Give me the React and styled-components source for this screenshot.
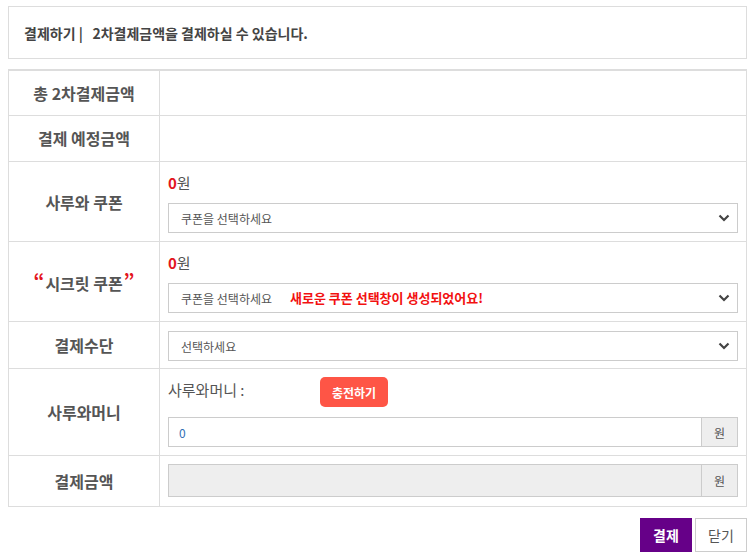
import React from 'react';
import styled, { createGlobalStyle } from 'styled-components';

const GlobalStyle = createGlobalStyle`
  * { box-sizing: border-box; }
  body {
    margin: 0;
    background: #fff;
    font-family: "Noto Sans CJK KR", "Noto Sans", sans-serif;
    color: #555;
  }
`;

const Page = styled.div`
  width: 739px;
  margin: 6px 0 0 8px;
`;

const Notice = styled.div`
  height: 53px;
  border: 1px solid #ddd;
  padding: 0 15px;
  display: flex;
  align-items: center;
  font-size: 14px;
  font-weight: 700;
  color: #444;
  white-space: pre;
  margin-bottom: 10px;
`;

const Table = styled.table`
  width: 100%;
  border-collapse: collapse;
  border-top: 2px solid #ddd;
  table-layout: fixed;

  th, td {
    border: 1px solid #ddd;
  }
`;

const Label = styled.th`
  width: 151px;
  font-size: 16px;
  font-weight: 700;
  color: #555;
  text-align: center;
  line-height: 20px;
  padding: ${p => p.$pad || '12px 0'};
`;

const Quote = styled.span`
  color: #e3151d;
  font-size: 19px;
  font-weight: 700;
  vertical-align: 2px;
  margin: 0 1px;
`;

const Cell = styled.td`
  padding: ${p => p.$pad || '8px'};
  vertical-align: top;
`;

const Amount = styled.div`
  height: 24px;
  line-height: 24px;
  font-size: 15px;
  color: #555;
  margin: 1px 0 8px;

  b {
    color: #e3151d;
    font-weight: 700;
  }
`;

const SelectWrap = styled.div`
  position: relative;
  height: 30px;
`;

const Select = styled.select`
  appearance: none;
  width: 100%;
  height: 30px;
  border: 1px solid #ccc;
  border-radius: 0;
  background: #fff;
  padding: 0 12px;
  font-family: inherit;
  font-size: 12px;
  color: #555;
  outline: none;
`;

const Chevron = styled.svg`
  position: absolute;
  right: 8px;
  top: 11px;
  pointer-events: none;
`;

const NewTag = styled.span`
  position: absolute;
  left: 122px;
  top: 0;
  line-height: 30px;
  font-size: 13px;
  font-weight: 700;
  color: #f21111;
  pointer-events: none;
`;

const MoneyLine = styled.div`
  display: flex;
  align-items: center;
  height: 30px;
  margin: 0 0 10px;
  font-size: 15px;
  color: #555;
`;

const MoneyLabel = styled.span`
  width: 152px;
  margin-top: -6px;
`;

const ChargeButton = styled.button`
  height: 30px;
  padding: 0 12px;
  border: 0;
  border-radius: 5px;
  background: #fe5546;
  color: #fff;
  font-family: inherit;
  font-size: 12px;
  font-weight: 700;
`;

const InputGroup = styled.div`
  display: flex;
  height: ${p => p.$h || 30}px;
`;

const Input = styled.input`
  flex: 1;
  min-width: 0;
  height: 100%;
  border: 1px solid #ccc;
  border-right: 0;
  background: ${p => (p.disabled ? '#eee' : '#fff')};
  padding: 0 10px;
  font-family: inherit;
  font-size: 12px;
  color: #2f6fb5;
  outline: none;
`;

const Addon = styled.span`
  width: 37px;
  display: flex;
  align-items: center;
  justify-content: center;
  border: 1px solid #ccc;
  background: #eee;
  font-size: 12px;
  color: #555;
`;

const Actions = styled.div`
  display: flex;
  justify-content: flex-end;
  gap: 3px;
  margin-top: 11px;
`;

const ActionButton = styled.button`
  width: 52px;
  height: 34px;
  border: 1px solid ${p => (p.$primary ? '#660088' : '#ccc')};
  background: ${p => (p.$primary ? '#660088' : '#fff')};
  color: ${p => (p.$primary ? '#fff' : '#555')};
  font-family: inherit;
  font-size: 14px;
  font-weight: ${p => (p.$primary ? 700 : 400)};
  padding: 0;
`;

const Drop = ({ children, tag }) => (
  <SelectWrap>
    <Select defaultValue="">
      <option value="">{children}</option>
    </Select>
    {tag && <NewTag>{tag}</NewTag>}
    <Chevron width="12" height="8" viewBox="0 0 12 8">
      <path d="M1.5 1.5 L6 6 L10.5 1.5" fill="none" stroke="#444" strokeWidth="2.2" />
    </Chevron>
  </SelectWrap>
);

export default function App() {
  return (
    <Page>
      <GlobalStyle />
      <Notice>{'결제하기 |   2차결제금액을 결제하실 수 있습니다.'}</Notice>
      <Table>
        <tbody>
          <tr>
            <Label>총 2차결제금액</Label>
            <Cell />
          </tr>
          <tr>
            <Label $pad="12px 0 13px">결제 예정금액</Label>
            <Cell />
          </tr>
          <tr>
            <Label>사루와 쿠폰</Label>
            <Cell>
              <Amount><b>0</b>원</Amount>
              <Drop>쿠폰을 선택하세요</Drop>
            </Cell>
          </tr>
          <tr>
            <Label><Quote>“</Quote>시크릿 쿠폰<Quote>”</Quote></Label>
            <Cell>
              <Amount><b>0</b>원</Amount>
              <Drop tag="새로운 쿠폰 선택창이 생성되었어요!">쿠폰을 선택하세요</Drop>
            </Cell>
          </tr>
          <tr>
            <Label>결제수단</Label>
            <Cell $pad="9px 8px 7px">
              <Drop>선택하세요</Drop>
            </Cell>
          </tr>
          <tr>
            <Label>사루와머니</Label>
            <Cell>
              <MoneyLine>
                <MoneyLabel>사루와머니 :</MoneyLabel>
                <ChargeButton>충전하기</ChargeButton>
              </MoneyLine>
              <InputGroup>
                <Input defaultValue="0" />
                <Addon>원</Addon>
              </InputGroup>
            </Cell>
          </tr>
          <tr>
            <Label>결제금액</Label>
            <Cell $pad="8px 8px 9px">
              <InputGroup $h={33}>
                <Input disabled />
                <Addon>원</Addon>
              </InputGroup>
            </Cell>
          </tr>
        </tbody>
      </Table>
      <Actions>
        <ActionButton $primary>결제</ActionButton>
        <ActionButton>닫기</ActionButton>
      </Actions>
    </Page>
  );
}
